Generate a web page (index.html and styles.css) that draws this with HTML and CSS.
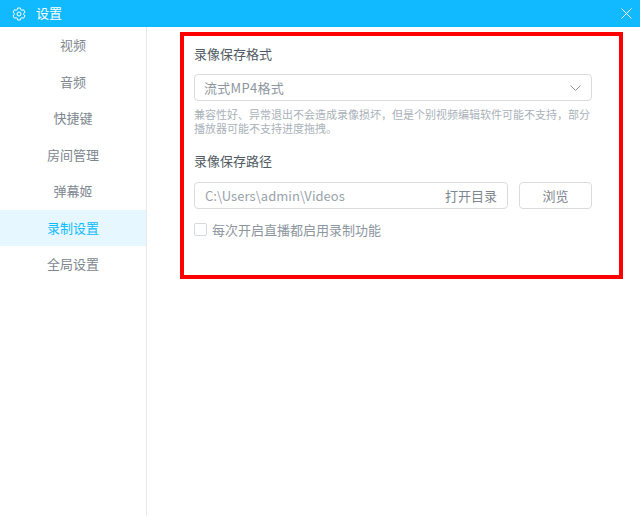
FILE: index.html
```html
<!DOCTYPE html>
<html lang="zh-CN">
<head>
  <meta charset="UTF-8" />
  <title>设置</title>
  <link rel="stylesheet" href="styles.css">
</head>
<body>
  <div class="titlebar">
    <svg class="gear" width="14" height="14" viewBox="0 0 14 14" fill="none" stroke="#fff" stroke-width="1">
      <path d="M5.6 1h2.800l.4 1.700 1.100.6 1.700-.5 1.400 2.400-1.300 1.200v1.200l1.300 1.200-1.400 2.400-1.700-.5-1.100.6-.4 1.700H5.600l-.4-1.700-1.100-.6-1.700.5L1 8.800l1.300-1.200V6.400L1 5.200l1.400-2.400 1.700.5 1.100-.6z" />
      <circle cx="7" cy="7" r="2" />
    </svg>
    <span class="title">设置</span>
    <svg class="close" width="11" height="11" viewBox="0 0 11 11" stroke="#fff" stroke-width="1">
      <path d="M.5.5l10 10M10.500.5l-10 10" />
    </svg>
  </div>

  <div class="main">
    <!-- Left menu -->
    <div class="sidebar">
      <div class="nav-item">视频</div>
      <div class="nav-item">音频</div>
      <div class="nav-item">快捷键</div>
      <div class="nav-item">房间管理</div>
      <div class="nav-item">弹幕姬</div>
      <div class="nav-item active">录制设置</div>
      <div class="nav-item">全局设置</div>
    </div>

    <!-- Recording settings -->
    <div class="content">
      <div class="panel">
        <h3>录像保存格式</h3>
        <div class="field select">
          <span>流式MP4格式</span>
          <svg width="11" height="6" viewBox="0 0 11 6" fill="none" stroke="#8a949c" stroke-width="1">
            <path d="M.5.5l5 5 5-5" />
          </svg>
        </div>
        <p class="hint">兼容性好、异常退出不会造成录像损坏，但是个别视频编辑软件可能不支持，部分播放器可能不支持进度拖拽。</p>

        <h3 class="path-title">录像保存路径</h3>
        <div class="path-row">
          <div class="field path">
            <span class="path-value">C:\Users\admin\Videos</span>
            <span class="open-dir">打开目录</span>
          </div>
          <button class="browse">浏览</button>
        </div>
        <label class="check">
          <span class="box"></span>
          每次开启直播都启用录制功能
        </label>
      </div>
    </div>
  </div>
</body>
</html>
```

FILE: styles.css
```css
* {
  box-sizing: border-box;
}

html, body {
  height: 100%;
}

body {
  margin: 0;
  background: #fff;
  color: #99a2aa;
  font-family: "Noto Sans CJK SC", "Liberation Sans", sans-serif;
  font-size: 13px;
  overflow: hidden;
}

.titlebar {
  display: flex;
  align-items: center;
  height: 27px;
  padding: 0 8px 0 12px;
  background: #11baff;
  color: #fff;
}

.title {
  margin-left: 10px;
  font-size: 13px;
  line-height: 16px;
  height: 17px;
  flex: 1;
}

.main {
  display: flex;
  height: 489px;
}

.sidebar {
  width: 147px;
  border-right: 1px solid #e8eaec;
}

.nav-item {
  height: 36.5px;
  line-height: 36.5px;
  text-align: center;
  color: #7d868e;
}

.nav-item.active {
  background: #e6f7ff;
  color: #11baff;
}

.content {
  flex: 1;
  padding: 5px 17px 0 33px;
}

.panel {
  height: 247px;
  padding: 8px 27px 0 10px;
  border: 4px solid #ff0000;
}

h3 {
  margin: 0;
  height: 22px;
  line-height: 20px;
  font-size: 13px;
  font-weight: 400;
  color: #505a62;
}

.field {
  display: flex;
  align-items: center;
  height: 27px;
  padding: 0 10px 0 9px;
  border: 1px solid #d9dcdf;
  border-radius: 4px;
  background: #fff;
}

.select {
  justify-content: space-between;
  margin-top: 8px;
  color: #8d969e;
}

.select span {
  letter-spacing: 0.3px;
}

.hint {
  margin: 6px 0 0;
  font-size: 11px;
  line-height: 14px;
  color: #a9b2b9;
}

.path-title {
  margin-top: 16px;
}

.path-row {
  display: flex;
  gap: 11px;
  margin-top: 9px;
}

.path {
  flex: 1;
  justify-content: space-between;
  padding-left: 10px;
}

.path-value {
  color: #99a2aa;
  letter-spacing: 0.05px;
}

.open-dir {
  color: #7d868e;
}

.browse {
  width: 73px;
  height: 27px;
  padding: 0;
  border: 1px solid #d9dcdf;
  border-radius: 4px;
  background: #fff;
  color: #7d868e;
  font: inherit;
}

.check {
  display: flex;
  align-items: center;
  gap: 5px;
  margin-top: 11px;
  color: #8d969e;
}

.box {
  width: 13px;
  height: 13px;
  border: 1px solid #d5dade;
  border-radius: 2px;
}
```
